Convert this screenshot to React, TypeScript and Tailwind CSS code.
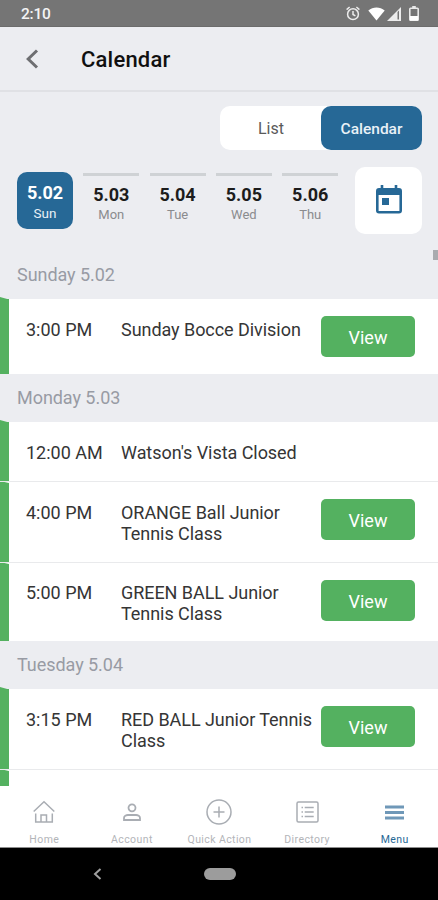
import React from "react";
import clsx from "clsx";

type Event = { time: string; title: string; view?: boolean; height: string };

const DAYS = [
  { date: "5.02", name: "Sun" },
  { date: "5.03", name: "Mon" },
  { date: "5.04", name: "Tue" },
  { date: "5.05", name: "Wed" },
  { date: "5.06", name: "Thu" },
];

const SECTIONS: { title: string; events: Event[] }[] = [
  {
    title: "Sunday 5.02",
    events: [
      { time: "3:00 PM", title: "Sunday Bocce Division", view: true, height: "h-[75px]" },
    ],
  },
  {
    title: "Monday 5.03",
    events: [
      { time: "12:00 AM", title: "Watson's Vista Closed", height: "h-[60px]" },
      { time: "4:00 PM", title: "ORANGE Ball Junior Tennis Class", view: true, height: "h-[80.5px]" },
      { time: "5:00 PM", title: "GREEN BALL Junior Tennis Class", view: true, height: "h-[78.5px]" },
    ],
  },
  {
    title: "Tuesday 5.04",
    events: [
      { time: "3:15 PM", title: "RED BALL Junior Tennis Class", view: true, height: "h-[81px]" },
      { time: "", title: "", height: "h-[60px]" },
    ],
  },
];

const StatusBar = () => (
  <div className="h-[27px] shrink-0 bg-[#757575] border-b border-[#6c6c6c] flex items-center pl-[21px] pr-[19px] text-white">
    <span className="text-[15.5px] font-medium leading-none pt-[4px] tracking-[-0.2px] text-[#f4f4f4]">2:10</span>
    <div className="ml-auto flex items-center pt-[1px]">
      <svg width="14" height="15" viewBox="0 0 14 15" fill="none" stroke="#ececec" strokeWidth="1.5">
        <circle cx="7" cy="8.2" r="5.4" />
        <path d="M7 5v3.5l2.4 1.4M.6 3.6 3.6 1M13.4 3.6 10.4 1" />
      </svg>
      <svg className="ml-[8px]" width="17" height="14" viewBox="0 0 17 14" fill="#fff">
        <path d="M.3 3.4C5 -.5 12 -.5 16.7 3.4L8.5 13.6z" />
      </svg>
      <svg className="ml-[2px]" width="14" height="14" viewBox="0 0 14 14">
        <path d="M0 14 14 0v14z" fill="#ececec" />
        <path d="M10.5 5 12 3.5V12.5H10.5z" fill="#757575" />
      </svg>
      <svg className="ml-[8px]" width="10" height="15" viewBox="0 0 10 15" fill="none">
        <path d="M3.2 0h3.6v2H3.2z" fill="#e8e8e8" />
        <rect x=".8" y="2.2" width="8.4" height="12" rx=".8" stroke="#e8e8e8" strokeWidth="1.6" />
        <path d="M1 10h8v4.5H1z" fill="#fff" />
      </svg>
    </div>
  </div>
);

const Header = () => (
  <header className="h-[65px] shrink-0 flex items-center pl-[26px] border-b-2 border-[#e0e1e5]">
    <svg width="13" height="20" viewBox="0 0 13 20" fill="none" stroke="#6e6f72" strokeWidth="3">
      <path d="M11 1.5 2.2 10l8.8 8.5" />
    </svg>
    <h1 className="ml-[42px] pt-[2px] text-[22px] font-[470] leading-none tracking-[0.2px] text-[#101010]">Calendar</h1>
  </header>
);

const ViewToggle = () => (
  <div className="mt-[14px] ml-[220px] w-[202px] h-[44px] shrink-0 rounded-[10px] bg-white flex leading-[46px] text-center">
    <button className="w-[101px] pl-[1px] text-[16px] text-[#5a5a5a]">List</button>
    <button className="w-[101px] rounded-[10px] bg-[#266896] text-[15.5px] font-medium text-[#e9f1f7]">Calendar</button>
  </div>
);

const DayStrip = () => (
  <div className="mt-[17px] h-[67px] shrink-0 flex items-center pl-[17px] pr-[16px]">
    <div className="flex gap-[10.3px] h-[57px]">
      {DAYS.map((day, i) => (
        <div
          key={day.date}
          className={clsx(
            "w-[56px] flex flex-col items-center",
            i === 0 ? "rounded-[10px] bg-[#266896] text-white pt-[10px]" : "border-t-[3px] border-[#cfd2d5] mt-[1px] pt-[8px]"
          )}
        >
          <span className={clsx("text-[18px] font-bold leading-[21px]", i > 0 && "text-[#1c1c1c]")}>{day.date}</span>
          <span className={clsx("leading-[20px]", i > 0 ? "text-[13px] text-[#8a8b8e]" : "text-[13.5px] text-[#e9f1f7]")}>{day.name}</span>
        </div>
      ))}
    </div>
    <button className="ml-auto w-[67px] h-[67px] rounded-[10px] bg-white flex items-center justify-center pb-[2px]">
      <svg width="26" height="29" viewBox="0 0 26 29" fill="#266896">
        <path
          fillRule="evenodd"
          d="M4.7 0h2.6v3h11.4V0h2.6v3H23a3 3 0 0 1 3 3v19.5a3 3 0 0 1-3 3H3a3 3 0 0 1-3-3V6a3 3 0 0 1 3-3h1.7zM2.6 10v15.9h20.8V10z"
        />
        <path d="M6 13h7v7H6z" />
      </svg>
    </button>
  </div>
);

const EventRow = ({ event, first, last }: { event: Event; first: boolean; last: boolean }) => (
  <div className={clsx("shrink-0 flex items-start bg-white relative", event.height, !last && "border-b border-[#e9eaec]")}>
    <svg
      className={clsx("absolute left-0", first ? "-top-[2px]" : "top-0")}
      width="9"
      height="3"
      viewBox="0 0 9 3"
    >
      <path d={first ? "M0 0 9 2.5V3H0z" : "M0 -1 9 1V3H0z"} fill="#54b160" />
    </svg>
    <div className={clsx("w-[9px] self-stretch shrink-0 bg-[#54b160]", !first && "mt-[1px]")} />
    <div className="pl-[17px] pt-[19.5px] w-[112px] text-[18px] font-[370] leading-[21px] text-[#353535]">{event.time}</div>
    <div className="pt-[19.5px] w-[194px] text-[18px] font-[370] leading-[21px] tracking-[-0.05px] text-[#353535]">{event.title}</div>
    {event.view && (
      <button className="mt-[17px] ml-[6px] w-[94px] h-[41px] rounded-[5px] bg-[#54b160] text-white text-[18px] font-[450] leading-[43px]">
        View
      </button>
    )}
  </div>
);

const HomeIcon = () => (
  <svg width="22" height="24" viewBox="0 0 22 24" fill="none" stroke="#a9adb3" strokeWidth="1.5">
    <path d="M.7 11.5 11 1.7l10.3 9.8M2.7 13.5V22h16.6v-8.5M8 22v-7h5.5V22" />
  </svg>
);

const AccountIcon = () => (
  <svg width="18" height="24" viewBox="0 0 18 24" fill="none" stroke="#a9adb3" strokeWidth="1.8">
    <circle cx="9" cy="7.8" r="3.5" />
    <path d="M1 20v-2c0-2 2.2-3 4-3h8c1.8 0 4 1 4 3v2z" />
  </svg>
);

const QuickIcon = () => (
  <svg width="26" height="26" viewBox="0 0 26 26" fill="none" stroke="#a9adb3" strokeWidth="1.5">
    <circle cx="13" cy="13" r="12" />
    <path d="M13 7.5v11M7.5 13h11" />
  </svg>
);

const DirectoryIcon = () => (
  <svg width="23" height="24" viewBox="0 0 23 24" fill="none" stroke="#a9adb3" strokeWidth="1.5">
    <rect x="1" y="2" width="21" height="20" rx="1.5" />
    <path d="M5.5 7.5H7M5.5 12H7M5.5 16.5H7M8.7 7.5h9M8.7 12h9M8.7 16.5h9" />
  </svg>
);

const MenuIcon = () => (
  <svg width="19" height="24" viewBox="0 0 19 24" fill="#6f98b8">
    <path d="M0 5.500h19v3H0zM0 11h19v3H0zM0 16.500h19v3H0z" />
  </svg>
);

const TABS = [
  { label: "Home", icon: <HomeIcon /> },
  { label: "Account", icon: <AccountIcon /> },
  { label: "Quick Action", icon: <QuickIcon /> },
  { label: "Directory", icon: <DirectoryIcon /> },
  { label: "Menu", icon: <MenuIcon />, active: true },
];

const TabBar = () => (
  <nav className="h-[62px] shrink-0 bg-white border-b border-[#8d8d8d] grid grid-cols-5">
    {TABS.map((tab) => (
      <div key={tab.label} className="flex flex-col items-center pt-[13px] pl-[1px]">
        <div className="h-[26px] flex items-center">{tab.icon}</div>
        <span
          className={clsx(
            "mt-[8px] text-[10.5px] leading-[14px] whitespace-nowrap tracking-[0.4px]",
            tab.active ? "text-[#266896]" : "text-[#b3b5b9]"
          )}
        >
          {tab.label}
        </span>
      </div>
    ))}
  </nav>
);

const SystemNav = () => (
  <div className="h-[52px] shrink-0 bg-black flex items-center pl-[93px]">
    <svg width="9" height="12" viewBox="0 0 9 12" fill="none" stroke="#a0a0a0" strokeWidth="2">
      <path d="M7.5 1 2 6l5.5 5" />
    </svg>
    <div className="ml-[102px] w-[32px] h-[12px] rounded-full bg-[#9c9c9c]" />
  </div>
);

export default function App() {
  return (
    <div className="w-[438px] h-[900px] overflow-hidden flex flex-col bg-[#ecedf1] font-['Roboto',sans-serif]">
      <StatusBar />
      <Header />
      <ViewToggle />
      <DayStrip />
      <main className="relative h-[552px] shrink-0 overflow-hidden flex flex-col pt-[17px]">
        {SECTIONS.map((section) => (
          <section key={section.title} className="shrink-0">
            <h2 className="h-[48px] pl-[17px] text-[18px] leading-[48px] tracking-[-0.05px] text-[#989ba4]">{section.title}</h2>
            {section.events.map((event, i) => (
              <EventRow key={i} event={event} first={i === 0} last={i === section.events.length - 1} />
            ))}
          </section>
        ))}
        <div className="absolute right-0 top-[16px] w-[5px] h-[10px] bg-[#a9abaf]" />
      </main>
      <TabBar />
      <SystemNav />
    </div>
  );
}
